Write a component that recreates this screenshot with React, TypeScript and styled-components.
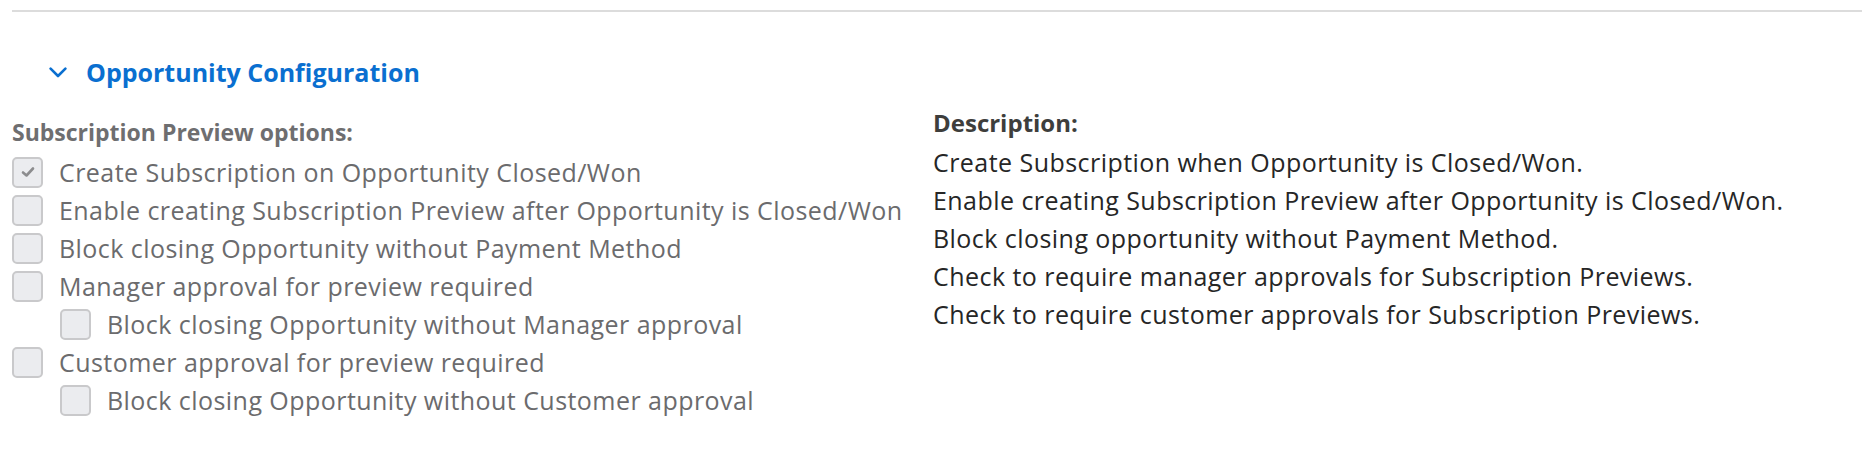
import React from "react";
import styled, { createGlobalStyle } from "styled-components";

const Global = createGlobalStyle`
  html, body { margin: 0; padding: 0; background: #ffffff; }
  body { font-family: "Open Sans", "Noto Sans", Arial, sans-serif; }
`;

const Page = styled.div`
  width: 1862px;
  height: 456px;
  box-sizing: border-box;
  padding: 10px 0 0 12px;
  overflow: hidden;
`;

const Divider = styled.hr`
  margin: 0;
  border: 0;
  border-top: 2px solid #dcdcdc;
`;

const Section = styled.section`
  display: flex;
  flex-direction: column;
`;

const SectionTitle = styled.button`
  display: flex;
  align-items: center;
  gap: 19px;
  margin: 45px 0 0 37px;
  padding: 0;
  border: 0;
  background: none;
  color: #0a6fd0;
  font-family: inherit;
  font-size: 25px;
  font-weight: 700;
  line-height: 30px;
  cursor: pointer;
`;

const Columns = styled.div`
  display: grid;
  grid-template-columns: 921px 1fr;
  margin-top: 24px;
`;

const Column = styled.div<{ $offset: number }>`
  display: flex;
  flex-direction: column;
  margin-top: ${(p) => p.$offset}px;
`;

const ColumnHeading = styled.div<{ $dark?: boolean }>`
  height: 42px;
  display: flex;
  align-items: center;
  font-size: ${(p) => (p.$dark ? 24 : 23)}px;
  font-weight: 700;
  color: ${(p) => (p.$dark ? "#3e3e3c" : "#6e6e70")};
  white-space: nowrap;
`;

const OptionRow = styled.label<{ $level: number }>`
  height: 38px;
  display: flex;
  align-items: center;
  gap: 16px;
  padding-left: ${(p) => p.$level * 48}px;
  font-size: 25px;
  letter-spacing: 0.45px;
  color: #6b6b6d;
  white-space: nowrap;
`;

const Box = styled.span`
  width: 31px;
  height: 31px;
  box-sizing: border-box;
  flex: none;
  display: flex;
  align-items: center;
  justify-content: center;
  border: 2px solid #c9c9cb;
  border-radius: 5px;
  background: #ebecef;
`;

const DescLine = styled.div`
  height: 38px;
  display: flex;
  align-items: center;
  font-size: 25px;
  letter-spacing: 0.45px;
  color: #262626;
  white-space: nowrap;
`;

const Chevron = () => (
  <svg width="18" height="11" viewBox="0 0 18 11" aria-hidden="true">
    <path d="M1.6 1.6 L9 9 L16.4 1.6" fill="none" stroke="#0a6fd0" strokeWidth="2.6" strokeLinecap="round" strokeLinejoin="round" />
  </svg>
);

const Check = () => (
  <svg width="14" height="12" viewBox="0 0 14 12" aria-hidden="true">
    <path d="M2 6.5 L5.5 9.5 L12 2.5" fill="none" stroke="#8c8c8e" strokeWidth="2.6" strokeLinecap="round" strokeLinejoin="round" />
  </svg>
);

const options = [
  { label: "Create Subscription on Opportunity Closed/Won", level: 0, checked: true },
  { label: "Enable creating Subscription Preview after Opportunity is Closed/Won", level: 0, checked: false },
  { label: "Block closing Opportunity without Payment Method", level: 0, checked: false },
  { label: "Manager approval for preview required", level: 0, checked: false },
  { label: "Block closing Opportunity without Manager approval", level: 1, checked: false },
  { label: "Customer approval for preview required", level: 0, checked: false },
  { label: "Block closing Opportunity without Customer approval", level: 1, checked: false },
];

const descriptions = [
  "Create Subscription when Opportunity is Closed/Won.",
  "Enable creating Subscription Preview after Opportunity is Closed/Won.",
  "Block closing opportunity without Payment Method.",
  "Check to require manager approvals for Subscription Previews.",
  "Check to require customer approvals for Subscription Previews.",
];

export default function App() {
  return (
    <>
      <Global />
      <Page>
        <Divider />
        <Section>
          <SectionTitle type="button">
            <Chevron />
            Opportunity Configuration
          </SectionTitle>
          <Columns>
            <Column $offset={0}>
              <ColumnHeading>Subscription Preview options:</ColumnHeading>
              {options.map((o) => (
                <OptionRow key={o.label} $level={o.level}>
                  <Box>{o.checked && <Check />}</Box>
                  {o.label}
                </OptionRow>
              ))}
            </Column>
            <Column $offset={-10}>
              <ColumnHeading $dark>Description:</ColumnHeading>
              {descriptions.map((d) => (
                <DescLine key={d}>{d}</DescLine>
              ))}
            </Column>
          </Columns>
        </Section>
      </Page>
    </>
  );
}
